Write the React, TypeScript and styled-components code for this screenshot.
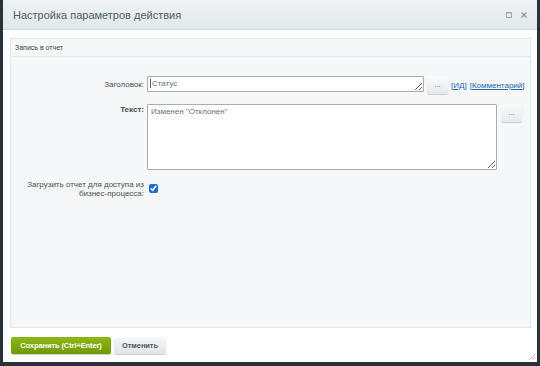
import React from 'react';
import styled, { createGlobalStyle } from 'styled-components';

const GlobalStyle = createGlobalStyle`
    html, body {
        margin: 0;
        padding: 0;
        background: #2b3237;
        font-family: "Liberation Sans", Arial, sans-serif;
    }
`;

const Dialog = styled.div`
    position: relative;
    margin: 0 3px;
    width: 534px;
    height: 362px;
    background: #fff;
    display: flex;
    flex-direction: column;
    box-sizing: border-box;
`;

const Header = styled.div`
    height: 30px;
    box-sizing: border-box;
    background: linear-gradient(#eef2f4, #e1e8eb);
    border-bottom: 1px solid #d3dbdf;
    display: flex;
    align-items: center;
    justify-content: space-between;
    padding: 0 10px 0 10px;

    h1 {
        margin: 0;
        font-size: 11px;
        font-weight: normal;
        color: #535c60;
    }
`;

const HeaderIcons = styled.div`
    display: flex;
    gap: 9px;
    align-items: center;
    color: #a2abaf;
`;

const Body = styled.div`
    flex: 1;
    padding: 8px 6px 0 7px;
    display: flex;
    flex-direction: column;
`;

const Panel = styled.div`
    height: 290px;
    box-sizing: border-box;
    border: 1px solid #e1e6e9;
    background: #f5f7f8;
`;

const SectionHeader = styled.div`
    height: 18px;
    line-height: 17px;
    box-sizing: border-box;
    border-bottom: 1px solid #e3e8ea;
    padding-left: 4px;
    font-size: 7px;
    color: #3d4447;
`;

const Form = styled.div`
    display: grid;
    grid-template-columns: 133px 1fr;
    column-gap: 3px;
    row-gap: 10px;
    padding-top: 19px;
`;

const Label = styled.div<{ $bold?: boolean; $top?: number }>`
    text-align: right;
    font-size: 8px;
    line-height: 9px;
    color: #4a4f52;
    font-weight: ${p => (p.$bold ? 'bold' : 'normal')};
    padding-top: ${p => p.$top ?? 0}px;
`;

const Cell = styled.div`
    display: flex;
    align-items: flex-start;
    gap: 3px;
`;

const Field = styled.div`
    position: relative;
`;

const TextArea = styled.textarea<{ $w: number; $h: number; $indent?: number }>`
    width: ${p => p.$w}px;
    height: ${p => p.$h}px;
    box-sizing: border-box;
    border: 1px solid #a9aeb1;
    border-radius: 1px;
    background: #fff;
    font-family: "Liberation Sans", Arial, sans-serif;
    font-size: 8px;
    line-height: 10px;
    color: #6a6f72;
    padding: 2px 3px 2px ${p => p.$indent ?? 3}px;
    margin: 0;
    display: block;
    outline: none;
    overflow: hidden;
`;

const Caret = styled.span`
    position: absolute;
    left: 3px;
    top: 3px;
    width: 1px;
    height: 9px;
    background: #555;
`;

const DotsButton = styled.button`
    width: 21px;
    height: 18px;
    padding: 0;
    border: none;
    border-radius: 2px;
    background: linear-gradient(#fbfcfc, #e4e8ea);
    box-shadow: 0 1px 1px rgba(0, 0, 0, 0.18);
    font-family: "Liberation Sans", Arial, sans-serif;
    font-size: 8px;
    color: #777;
    line-height: 10px;
`;

const Links = styled.div`
    display: flex;
    gap: 3px;
    padding-top: 5px;
    font-size: 8px;
    color: #2067b0;

    a {
        color: #2067b0;
        text-decoration: none;
    }
    a span {
        text-decoration: underline;
    }
`;

const Check = styled.input`
    margin: 4px 0 0 2px;
    width: 9px;
    height: 9px;
    accent-color: #1f6fd1;
`;

const Footer = styled.div`
    display: flex;
    gap: 3px;
    padding: 9px 0 0 1px;
`;

const Button = styled.button<{ $primary?: boolean }>`
    height: 17px;
    padding: 0;
    border: none;
    border-radius: 2px;
    white-space: nowrap;
    font-family: "Liberation Sans", Arial, sans-serif;
    font-size: 7.5px;
    font-weight: bold;
    letter-spacing: -0.1px;
    color: ${p => (p.$primary ? '#fff' : '#4f5558')};
    background: ${p =>
        p.$primary
            ? 'linear-gradient(#8cb713, #6f9a05)'
            : 'linear-gradient(#f6f8f9, #dfe4e6)'};
    box-shadow: 0 1px 1px rgba(0, 0, 0, 0.2);
    width: ${p => (p.$primary ? 100 : 52)}px;
`;

const Grip = styled.svg`
    position: absolute;
    right: 1px;
    bottom: 1px;
`;

export default function App() {
    return (
        <>
            <GlobalStyle />
            <Dialog>
                <Header>
                    <h1>Настройка параметров действия</h1>
                    <HeaderIcons>
                        <svg width="6" height="6" viewBox="0 0 6 6">
                            <rect x="0.5" y="0.5" width="5" height="5" fill="none" stroke="#9ea7ab" />
                            <line x1="0" y1="1" x2="6" y2="1" stroke="#9ea7ab" />
                        </svg>
                        <svg width="6" height="6" viewBox="0 0 6 6">
                            <path d="M0.5 0.5 L5.5 5.5 M5.5 0.5 L0.5 5.5" stroke="#8e979b" strokeWidth="1.2" />
                        </svg>
                    </HeaderIcons>
                </Header>
                <Body>
                    <Panel>
                        <SectionHeader>Запись в отчет</SectionHeader>
                        <Form>
                            <Label $top={4}>Заголовок:</Label>
                            <Cell>
                                <Field>
                                    <TextArea $w={277} $h={16} $indent={4} defaultValue="Статус" />
                                    <Caret />
                                </Field>
                                <DotsButton>...</DotsButton>
                                <Links>
                                    <a href="#">[<span>ИД</span>]</a>
                                    <a href="#">[<span>Комментарий</span>]</a>
                                </Links>
                            </Cell>
                            <Label $bold $top={1}>Текст:</Label>
                            <Cell>
                                <TextArea $w={350} $h={66} defaultValue={'Изменен "Отклонен"'} />
                                <DotsButton style={{ marginLeft: 1 }}>...</DotsButton>
                            </Cell>
                            <Label $top={0}>
                                Загрузить отчет для доступа из
                                <br />
                                бизнес-процесса:
                            </Label>
                            <Cell>
                                <Check type="checkbox" defaultChecked />
                            </Cell>
                        </Form>
                    </Panel>
                    <Footer>
                        <Button $primary>Сохранить (Ctrl+Enter)</Button>
                        <Button>Отменить</Button>
                    </Footer>
                </Body>
                <Grip width="8" height="8" viewBox="0 0 8 8">
                    <path d="M7 1 L1 7 M7 4 L4 7" stroke="#c5cbce" strokeWidth="1" />
                </Grip>
            </Dialog>
        </>
    );
}
